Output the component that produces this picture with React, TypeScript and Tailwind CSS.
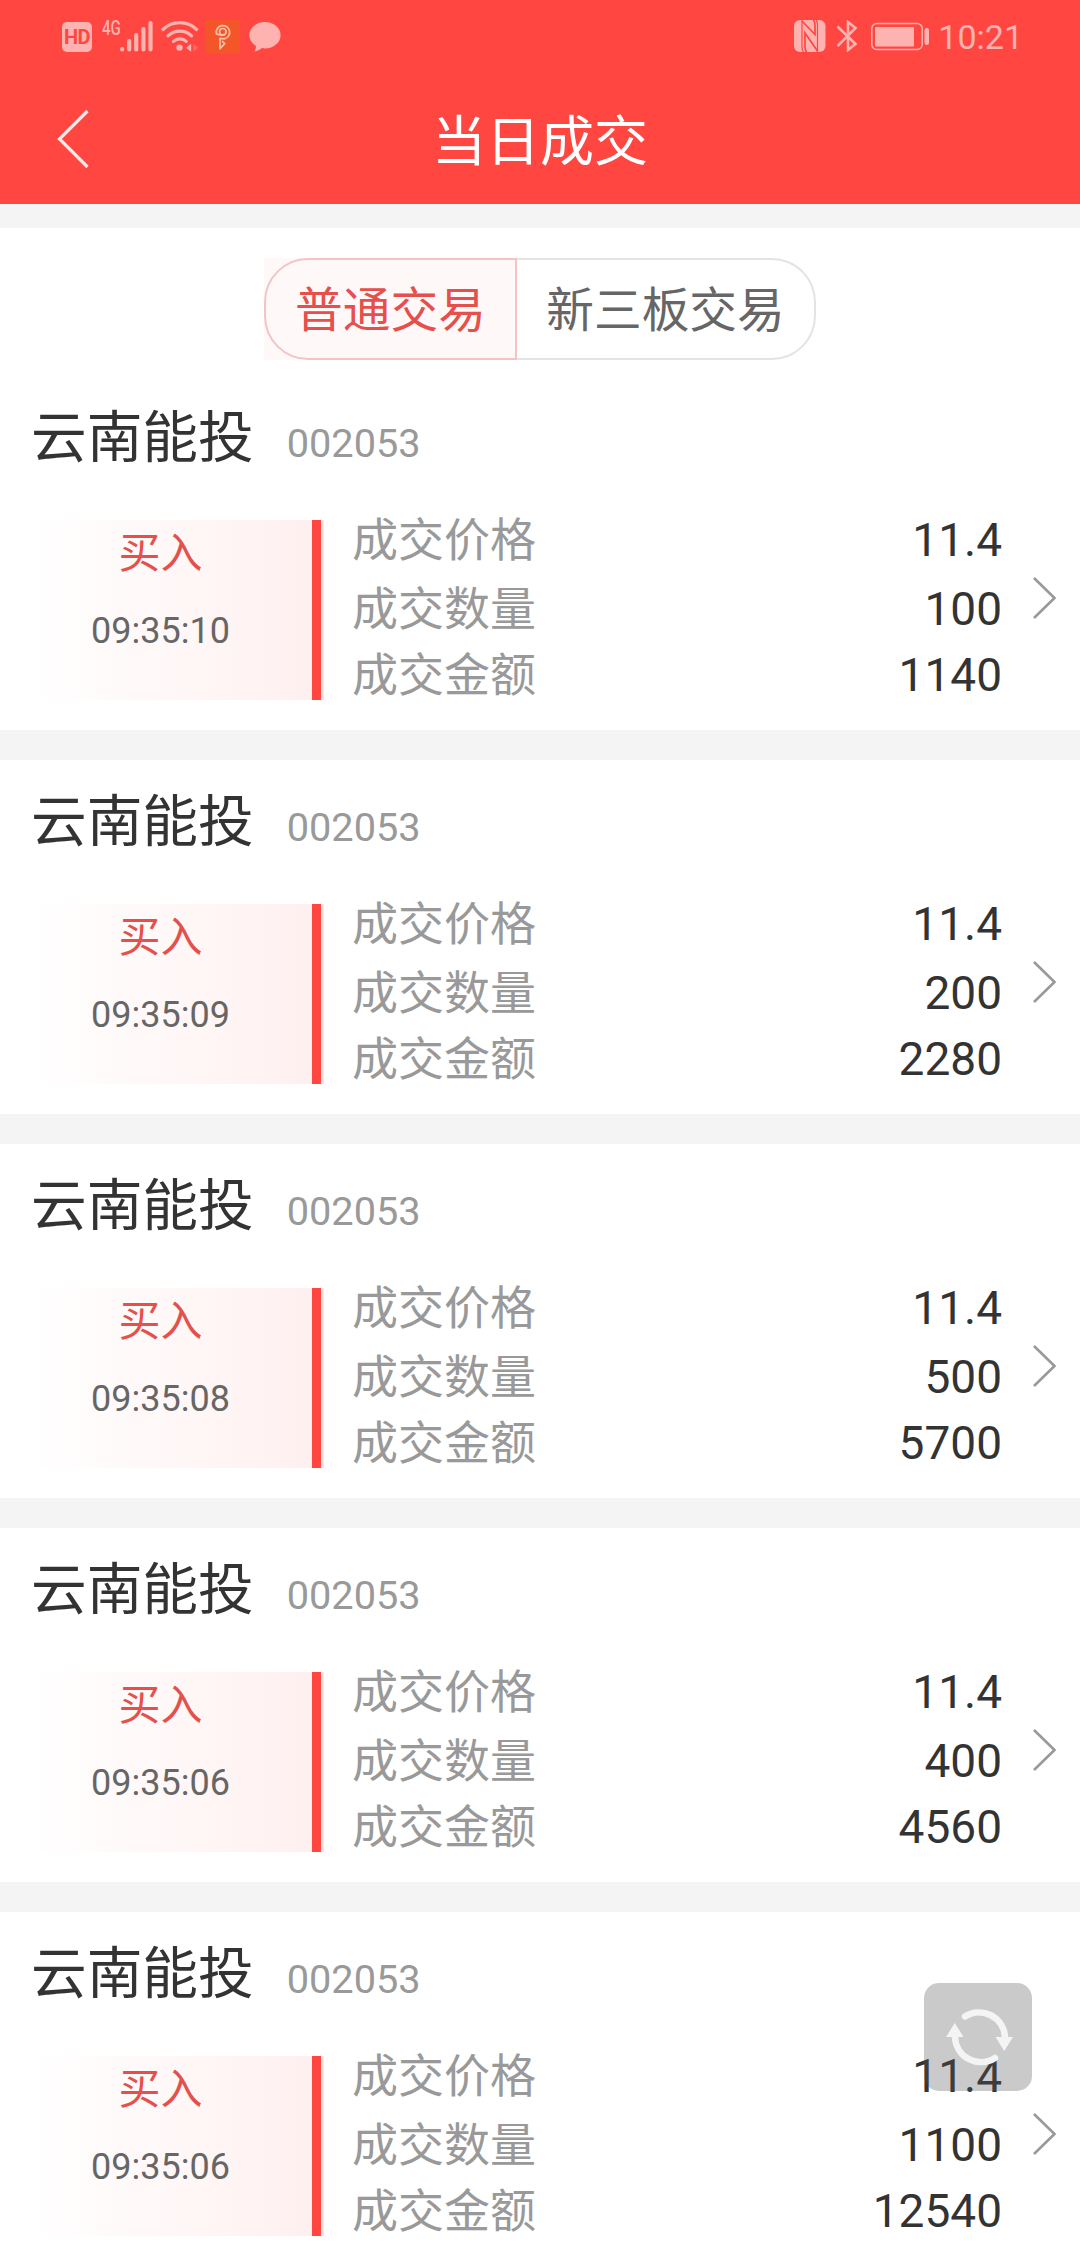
import React from 'react';

interface Trade {
  id: number;
  name: string;
  code: string;
  side: string;
  time: string;
  price: string;
  quantity: string;
  amount: string;
}

const trades: Trade[] = [
  { id: 1, name: '云南能投', code: '002053', side: '买入', time: '09:35:10', price: '11.4', quantity: '100', amount: '1140' },
  { id: 2, name: '云南能投', code: '002053', side: '买入', time: '09:35:09', price: '11.4', quantity: '200', amount: '2280' },
  { id: 3, name: '云南能投', code: '002053', side: '买入', time: '09:35:08', price: '11.4', quantity: '500', amount: '5700' },
  { id: 4, name: '云南能投', code: '002053', side: '买入', time: '09:35:06', price: '11.4', quantity: '400', amount: '4560' },
  { id: 5, name: '云南能投', code: '002053', side: '买入', time: '09:35:06', price: '11.4', quantity: '1100', amount: '12540' },
];

const SignalIcon = () => (
  <svg className="h-8 w-[34px]" viewBox="0 0 34 32" fill="none" stroke="currentColor" strokeWidth="4.2" strokeLinecap="round">
    <path d="M2.2 29v.4M9.2 21v8.4M16.2 15v14.4M23.4 9v20.4M30.5 3v26.4" />
  </svg>
);

const WifiIcon = () => (
  <svg className="h-8 w-[38px]" viewBox="0 0 38 32" fill="none" stroke="currentColor" strokeWidth="3.2" strokeLinecap="round">
    <path d="M2 9.5a24 24 0 0 1 33.6 0" />
    <path d="M7 15.8a17 17 0 0 1 23.6 0" />
    <path d="M12.4 21.4a9.5 9.5 0 0 1 12.8 0" />
    <circle cx="18.5" cy="27.6" r="3.2" fill="currentColor" stroke="none" />
    <path d="M25 27.7l5.2-4v8z" fill="currentColor" stroke="none" />
    <path d="M37 27.7l-4.6-4v8z" fill="currentColor" stroke="none" opacity="0.35" />
  </svg>
);

const KeyIcon = () => (
  <svg className="h-[34px] w-[34px] bg-[#f4562a]" viewBox="0 0 34 34" fill="none" stroke="#ffc0a6" strokeWidth="1.7" strokeLinecap="round" strokeLinejoin="round">
    <path d="M10.4 13.6a6.7 6.7 0 1 1 8 5.2l-4.400-.4v10.400l4.600-5.200-2.200-2.200" />
    <path d="M10.4 13.6c2.6 1.6 5.2 1.8 8 1" />
    <circle cx="16.8" cy="11.8" r="3.3" />
  </svg>
);

const ChatIcon = () => (
  <svg className="h-8 w-8" viewBox="0 0 32 32" fill="currentColor">
    <path d="M16 2C7.4 2 .4 7.9.4 15.2c0 4.4 2.5 8.2 6.5 10.6.2 2.2-.6 4.1-1.7 5.7 3.3-.2 5.8-1.5 7.8-3.4 1 .2 2 .3 3 .3 8.6 0 15.6-5.9 15.6-13.2S24.6 2 16 2z" />
  </svg>
);

const NfcIcon = () => (
  <svg className="h-8 w-8" viewBox="0 0 32 32">
    <rect width="31.5" height="32" rx="6" fill="currentColor" />
    <path d="M8 1l13 13.5V5c0-2.5-.4-4-1.8-5M23.5 31L11 13v13.5c0 2.5.4 4.5 1.8 5.5" fill="none" stroke="#ff4641" strokeWidth="1.7" />
    <path d="M8 0v27c0 2.5.4 4 1.6 5M23.5 32V5c0-2.5-.4-4-1.4-5" fill="none" stroke="#ff4641" strokeWidth="1.2" />
  </svg>
);

const BluetoothIcon = () => (
  <svg className="h-8 w-[22px]" viewBox="0 0 22 32" fill="none" stroke="currentColor" strokeWidth="2.6">
    <path d="M1.5 6.5L19.5 24l-7.500 6v-28l7.500 6L1.500 26" />
  </svg>
);

const BatteryIcon = () => (
  <svg className="h-8 w-[59px]" viewBox="0 0 59 32">
    <rect x="0.8" y="3.6" width="50.4" height="25.8" rx="5" fill="none" stroke="currentColor" strokeWidth="1.5" />
    <rect x="4" y="7" width="39" height="19.5" rx="1" fill="currentColor" />
    <rect x="53.5" y="8" width="4.5" height="17" rx="2.2" fill="currentColor" />
  </svg>
);

const StatusBar = () => (
  <div className="flex h-20 items-start pt-5 pl-[62px] text-[#ffb3b1]">
    <div className="mt-0.5 flex h-[30px] w-[30px] items-center justify-center rounded-[5px] bg-[#ffb3b1]">
      <span className="text-[20px] leading-none font-bold tracking-[-0.5px] text-[#ff4641]">HD</span>
    </div>
    <div className="ml-[10px] w-[18px]">
      <div className="w-[24px] origin-left scale-x-75 text-[20px] leading-4 font-medium">4G</div>
    </div>
    <SignalIcon />
    <div className="ml-[7px]"><WifiIcon /></div>
    <div className="ml-[7px]"><KeyIcon /></div>
    <div className="ml-[9px]"><ChatIcon /></div>
    <div className="mr-[57px] ml-auto flex">
      <NfcIcon />
      <div className="ml-[10px]"><BluetoothIcon /></div>
      <div className="ml-[13px]"><BatteryIcon /></div>
      <span className="ml-[8px] text-[34px] leading-[35px]">10:21</span>
    </div>
  </div>
);

const NavBar = () => (
  <div className="grid h-[124px] grid-cols-[100px_1fr_100px] items-center">
    <svg className="mb-[7px] ml-[56px] h-[60px] w-[34px]" viewBox="0 0 34 60" fill="none" stroke="#ffe9e8" strokeWidth="3.2">
      <path d="M31.5 2L3.5 30l28 28" />
    </svg>
    <h1 className="h-[124px] pt-px text-center text-[54px] leading-[124px] text-white">当日成交</h1>
  </div>
);

const TradeTabs = () => (
  <div className="flex h-[148px] justify-center pt-[30px]">
    <div className="flex h-[102px] text-[47.7px] leading-[98px]">
      <div className="bg-[#fff8f8]">
        <button className="h-[102px] w-[253px] rounded-l-[44px] border-2 border-[#f3c4c3] pt-[2px] text-[#e5504c]">普通交易</button>
      </div>
      <button className="h-[102px] w-[299px] rounded-r-[44px] border-2 border-l-0 border-[#e4e4e4] pt-[2px] text-[#666]">新三板交易</button>
    </div>
  </div>
);

const DetailRow = ({ label, value }: { label: string; value: string }) => (
  <div className="flex justify-between text-[46px] leading-[66px]">
    <span className="text-[#999]">{label}</span>
    <span className="text-[#333]">{value}</span>
  </div>
);

const TradeCard = ({ trade }: { trade: Trade }) => (
  <div className="h-[354px] bg-white pt-[22px]">
    <div className="flex h-[80px] items-baseline pl-[31px] leading-[80px]">
      <span className="text-[55.7px] text-[#333]">{trade.name}</span>
      <span className="ml-[33px] text-[39.7px] text-[#999]">{trade.code}</span>
    </div>
    <div className="mt-[29px] flex">
      {/* Side and time */}
      <div className="mt-[13px] flex h-[180px] w-[324px]">
        <div className="flex-1 bg-linear-to-r from-white from-10% to-[#fff0f0] pt-[4px] pl-[9px] text-center">
          <div className="text-[42px] leading-[60px] text-[#e5504c]">{trade.side}</div>
          <div className="mt-[23px] text-[36px] leading-[48px] text-[#666]">{trade.time}</div>
        </div>
        <div className="w-[12px] border-r-3 border-[#ffdede] bg-[#ff4641]" />
      </div>

      {/* Price, quantity, amount */}
      <div className="ml-[28px] w-[650px]">
        <DetailRow label="成交价格" value={trade.price} />
        <div className="mt-[3px]">
          <DetailRow label="成交数量" value={trade.quantity} />
        </div>
        <DetailRow label="成交金额" value={trade.amount} />
      </div>

      <svg className="mt-[69px] ml-[30px] h-[44px] w-[26px]" viewBox="0 0 26 44" fill="none" stroke="#999" strokeWidth="2.6">
        <path d="M2 2L22.5 22 2 42" />
      </svg>
    </div>
  </div>
);

const RefreshButton = () => (
  <button className="fixed top-[1983px] left-[924px] h-[108px] w-[108px] rounded-[15px] bg-[#555]/31">
    <svg className="h-[108px] w-[108px]" viewBox="0 0 108 108" fill="none" stroke="#f4f4f4" strokeWidth="6.5" strokeLinecap="round">
      <path d="M41 33.5A26 26 0 0 1 81 54" />
      <path d="M71 75A26 26 0 0 1 31 54" />
      <path d="M71.5 54h17.5l-8.7 14zM22 54h17.5l-8.7-14z" fill="#f4f4f4" stroke="none" />
    </svg>
  </button>
);

export default function App() {
  return (
    <div className="h-[2244px] w-[1080px] overflow-hidden bg-[#f4f4f4] font-['Roboto','Noto_Sans_CJK_SC',sans-serif]">
      <header className="bg-[#ff4641]">
        <StatusBar />
        <NavBar />
      </header>
      <main className="mt-6">
        <div className="bg-white">
          <TradeTabs />
        </div>
        <div className="flex flex-col gap-[30px]">
          {trades.map((trade) => (
            <TradeCard key={trade.id} trade={trade} />
          ))}
        </div>
      </main>
      <RefreshButton />
    </div>
  );
}
